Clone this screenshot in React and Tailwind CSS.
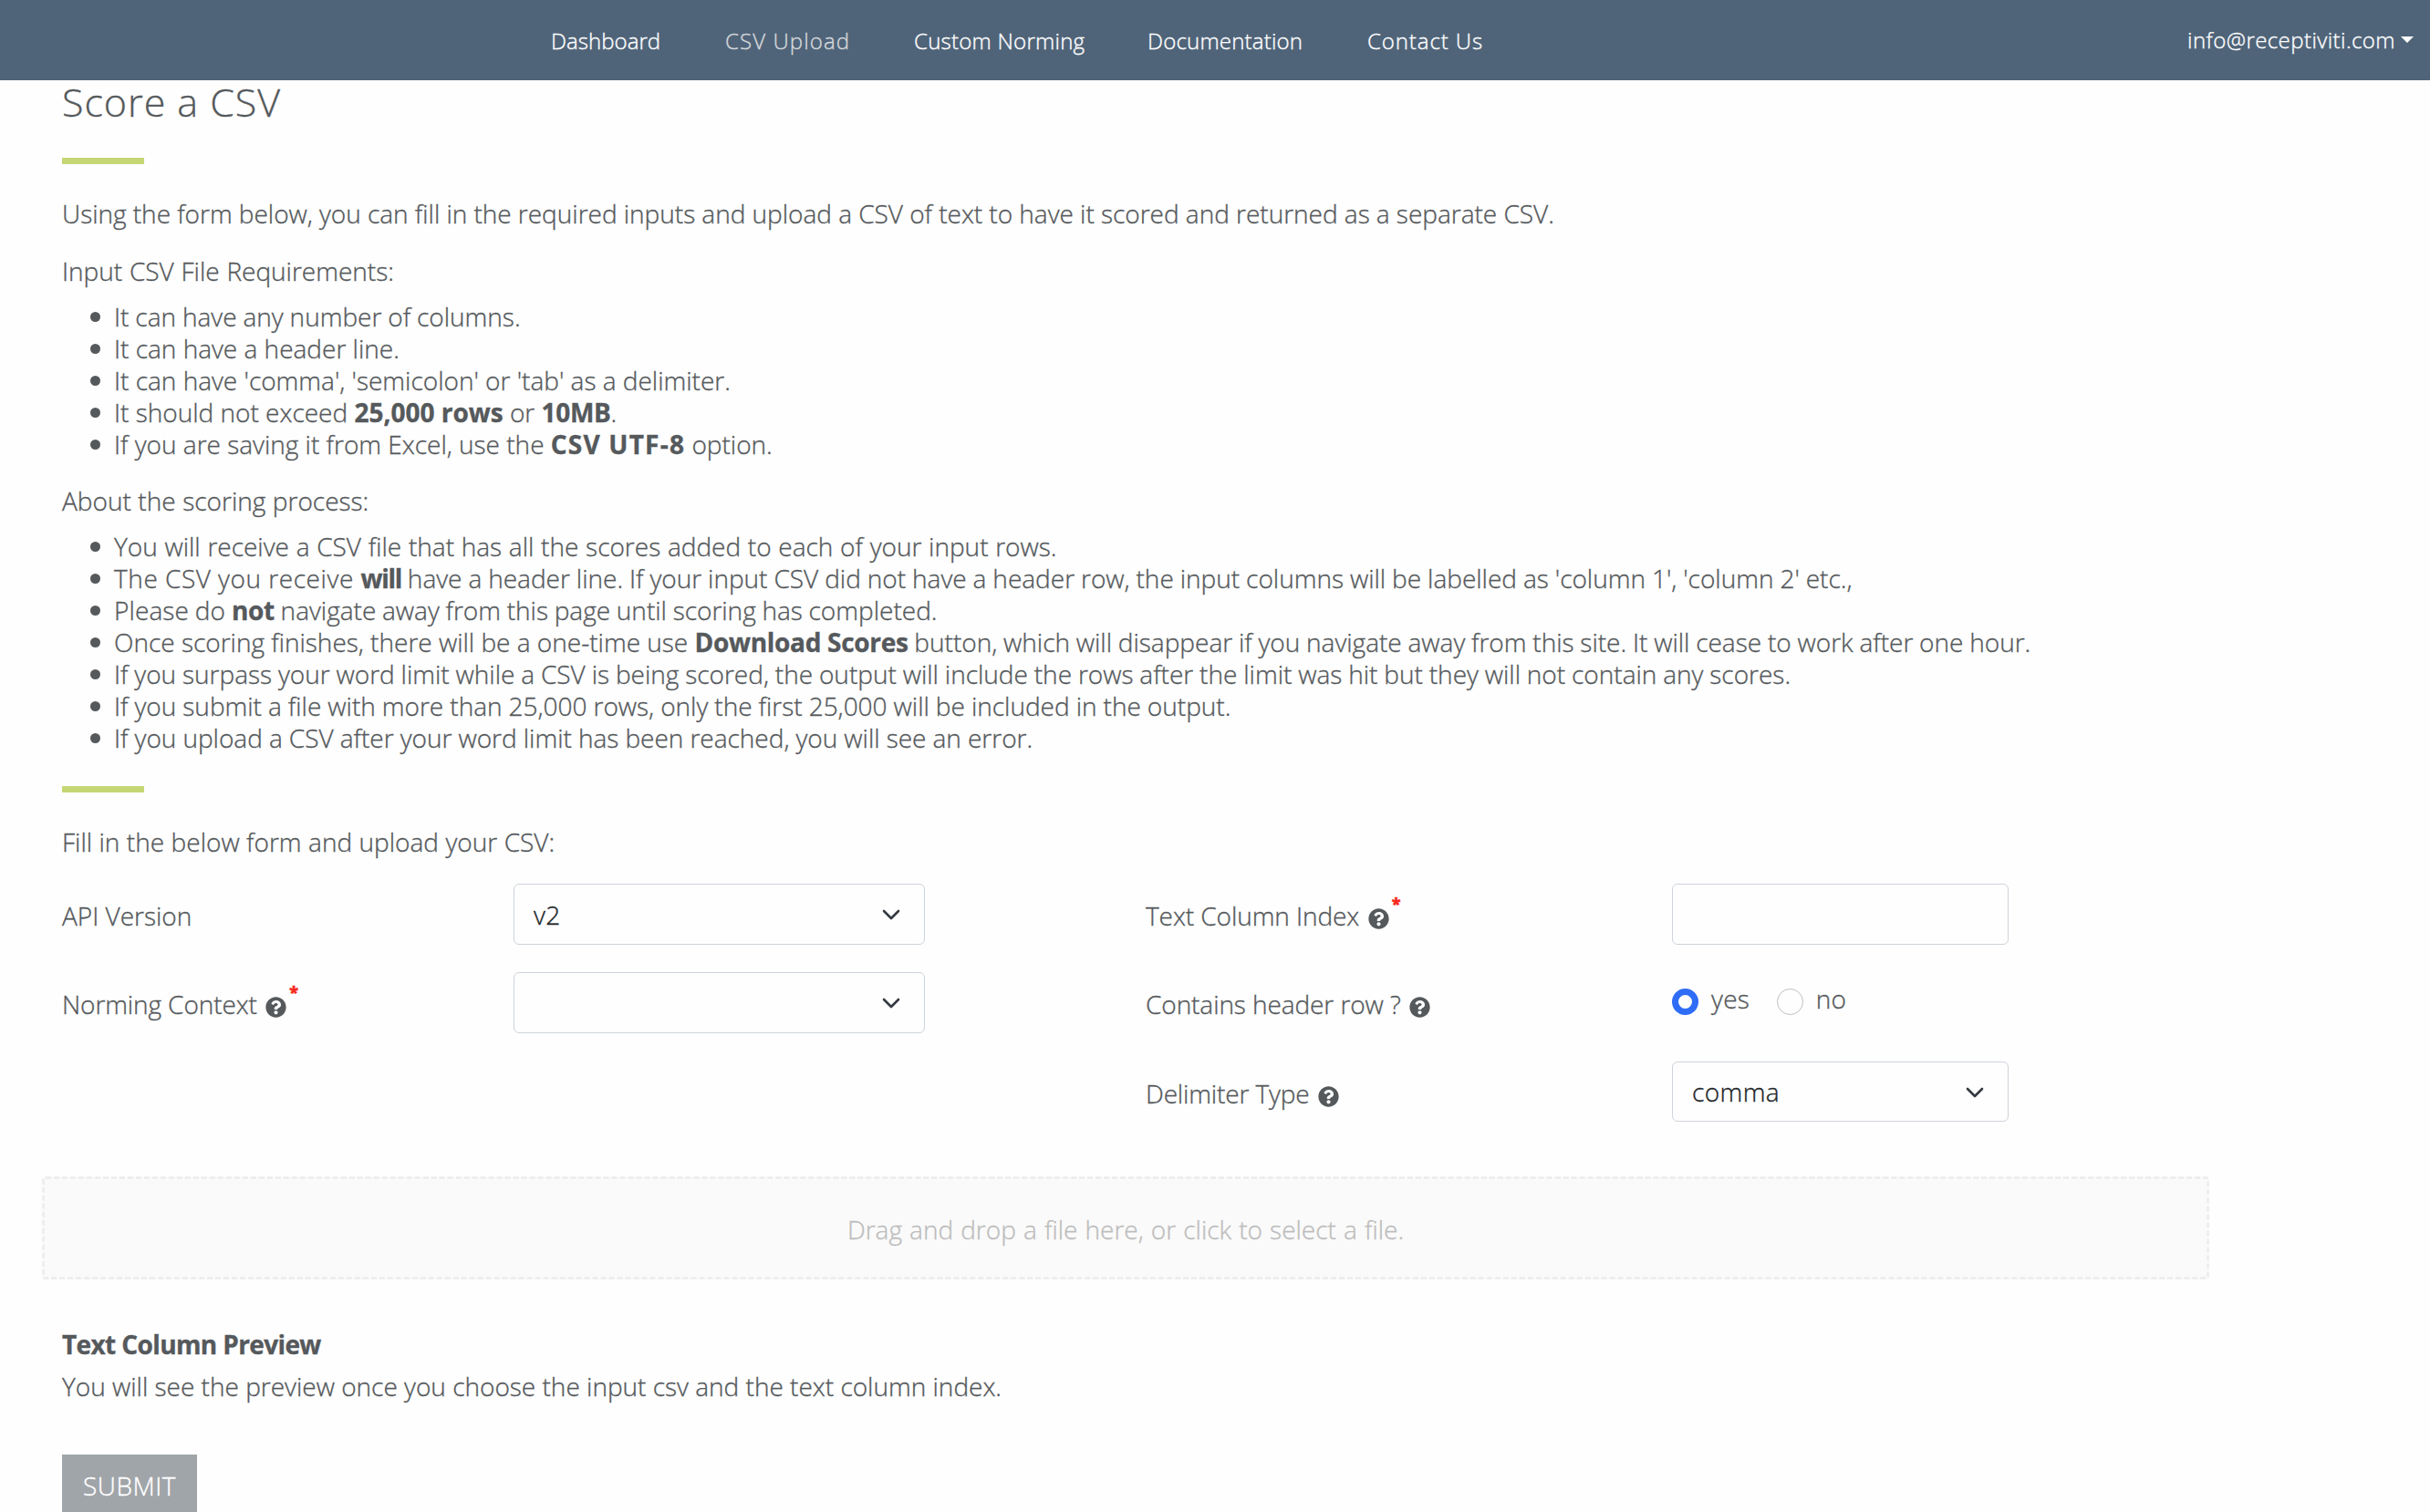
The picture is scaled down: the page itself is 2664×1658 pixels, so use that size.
import { useState } from "react";
import { FaQuestionCircle } from "react-icons/fa";

const navLinks = [
  { label: "Dashboard", style: "w-[191px] tracking-[0.05px]" },
  { label: "CSV Upload", style: "w-[207px] tracking-[1.1px] text-[#d5d8da]" },
  { label: "Custom Norming", style: "w-[256px] tracking-[0.25px]" },
  { label: "Documentation", style: "w-[241px] tracking-[0.2px]" },
  { label: "Contact Us", style: "w-[140px] tracking-[0.9px]" },
];

const requirements = [
  { style: "[word-spacing:-0.35px]", text: "It can have any number of columns." },
  { style: "", text: "It can have a header line." },
  { style: "", text: "It can have 'comma', 'semicolon' or 'tab' as a delimiter." },
  {
    style: "",
    text: <>It should not exceed <b className="font-bold">25,000 rows</b> or <b className="font-bold tracking-[-0.3px]">10MB</b>.</>,
  },
  {
    style: "",
    text: <>If you are saving it from Excel, use the <b className="font-bold tracking-[1.2px]">CSV UTF-8</b> option.</>,
  },
];

const processNotes = [
  { style: "[word-spacing:0.45px]", text: "You will receive a CSV file that has all the scores added to each of your input rows." },
  {
    style: "[word-spacing:-0.33px]",
    text: (
      <>
        <span className="tracking-[0.6px]">The CSV you receive </span>
        <b className="font-bold tracking-[-1.3px]">will</b> have a header line. If your input CSV did not have a header
        row, the input columns will be labelled as 'column 1', 'column 2' etc.,
      </>
    ),
  },
  {
    style: "[word-spacing:-0.55px]",
    text: <><span className="tracking-[0.1px]">Please do </span><b className="font-bold tracking-[-0.3px]">not</b> navigate away from this page until scoring has completed.</>,
  },
  {
    style: "",
    text: (
      <>
        Once scoring finishes, there will be a one-time use <b className="font-bold tracking-[-0.3px]">Download Scores</b>
        <span className="[word-spacing:-0.48px]"> button, which will disappear if you navigate away from this site. It will cease to work after one hour.</span>
      </>
    ),
  },
  {
    style: "[word-spacing:-0.4px]",
    text: "If you surpass your word limit while a CSV is being scored, the output will include the rows after the limit was hit but they will not contain any scores.",
  },
  { style: "[word-spacing:-0.25px]", text: "If you submit a file with more than 25,000 rows, only the first 25,000 will be included in the output." },
  { style: "[word-spacing:-0.2px]", text: "If you upload a CSV after your word limit has been reached, you will see an error." },
];

const BulletList = ({ items }) => (
  <ul className="mt-[15px] pl-[31px]">
    {items.map((item, i) => (
      <li key={i} className="flex items-center">
        <span className="mr-[15.5px] size-[10.5px] rounded-full bg-[#55595c]" />
        <span className={`whitespace-nowrap ${item.style}`}>{item.text}</span>
      </li>
    ))}
  </ul>
);

const Divider = ({ className }) => <div className={`h-[7px] w-[90px] bg-[#c5d775] ${className}`} />;

const Label = ({ children, help, required, className }) => (
  <div className={`flex pt-[18px] ${className}`}>
    <span className="whitespace-nowrap">{children}</span>
    {help && <FaQuestionCircle className="mt-[9px] ml-[9.5px] size-[23px]" />}
    {required && (
      <span className="-mt-[14px] ml-[3px] text-[18px] font-extrabold text-[#f5291b]">*</span>
    )}
  </div>
);

const Select = ({ value, className }) => (
  <div
    className={`flex items-center justify-between rounded-[6px] border-[1.5px] border-[#ced4da] pt-px pr-[26px] pl-[21px] text-[#212529] ${className}`}
  >
    <span className="tracking-[0.4px]">{value}</span>
    <svg
      viewBox="0 0 20 12"
      className="h-[12px] w-[20px]"
      fill="none"
      stroke="#343a40"
      strokeWidth="2.6"
      strokeLinecap="round"
      strokeLinejoin="round"
    >
      <path d="M2 2l8 8 8-8" />
    </svg>
  </div>
);

const App = () => {
  const [hasHeader, setHasHeader] = useState("yes");

  return (
    <div className="h-[1658px] w-full overflow-hidden bg-[#fefefe] font-['Open_Sans',sans-serif] text-[28px] leading-[35px] font-light text-[#55595c] [-webkit-text-stroke:0.35px]">

      <nav className="flex h-[88px] items-center bg-[#4f6479] text-[24px] text-white">
        <div className="flex pl-[604px]">
          {navLinks.map((link) => (
            <a key={link.label} className={`whitespace-nowrap ${link.style}`}>{link.label}</a>
          ))}
        </div>
        <div className="mr-[18px] mb-[2px] ml-auto flex items-center">
          <span className="tracking-[0.43px]">info@receptiviti.com</span>
          <span className="ml-[6px] border-x-[7px] border-t-[7px] border-x-transparent border-t-white" />
        </div>
      </nav>

      <main className="px-[68px]">
        <h1 className="text-[43px] leading-[48px] tracking-[0.95px]">Score a CSV</h1>
        <Divider className="mt-[37px]" />

        <p className="mt-[37px] [word-spacing:-0.11px]">
          Using the form below, you can fill in the required inputs and upload a CSV of text to have it scored and
          returned as a separate CSV.
        </p>

        <p className="mt-[28px] [word-spacing:0.5px]">Input CSV File Requirements:</p>
        <BulletList items={requirements} />

        <p className="mt-[27px] [word-spacing:0.3px]">About the scoring process:</p>
        <BulletList items={processNotes} />

        <Divider className="mt-[35px]" />
        <p className="mt-[37px] [word-spacing:0.2px]">Fill in the below form and upload your CSV:</p>

        {/* Form */}
        <div className="mt-[28px] flex h-[261px]">

          <div className="w-[1188px]">
            <div className="flex h-[97px]">
              <Label className="w-[495px]">API Version</Label>
              <Select value="v2" className="h-[67px] w-[451px]" />
            </div>
            <div className="flex h-[98px]">
              <Label className="w-[495px] tracking-[-0.1px]" help required>Norming Context</Label>
              <Select value="" className="h-[67px] w-[451px]" />
            </div>
          </div>

          <div>
            <div className="flex h-[97px]">
              <Label className="w-[577px] tracking-[-0.07px]" help required>Text Column Index</Label>
              <input className="h-[67px] w-[369px] rounded-[6px] border-[1.5px] border-[#ced4da] px-5" />
            </div>
            <div className="flex h-[98px]">
              <Label className="w-[577px] tracking-[-0.08px]" help>Contains header row ?</Label>
              <div className="flex pt-[12px]">
                {["yes", "no"].map((value) => (
                  <label key={value} className="mr-[29.5px] flex" onClick={() => setHasHeader(value)}>
                    <span
                      className={`mt-[6px] mr-[14px] size-[29px] rounded-full ${
                        hasHeader === value ? "border-[7.5px] border-[#2f6df6]" : "border-[1.5px] border-[#bfbfbf]"
                      }`}
                    />
                    <span className="tracking-[0.3px]">{value}</span>
                  </label>
                ))}
              </div>
            </div>
            <div className="flex h-[66px]">
              <Label className="w-[577px] tracking-[-0.14px]" help>Delimiter Type</Label>
              <Select value="comma" className="h-[66px] w-[369px]" />
            </div>
          </div>

        </div>

        {/* Dropzone */}
        <div className="mt-[60px] -ml-[22px] flex h-[113px] w-[2376px] items-center justify-center rounded-[4px] border-[3px] border-dashed border-[#eeeeee] bg-[#fafafa] pt-[3px] text-[#bdbdbd] [word-spacing:0.85px]">
          Drag and drop a file here, or click to select a file.
        </div>

        <p className="mt-[54px] font-bold tracking-[-0.62px]">Text Column Preview</p>
        <p className="mt-[11px]">You will see the preview once you choose the input csv and the text column index.</p>

        <button className="mt-[57px] block h-[63px] w-[148px] bg-[#a0a5a9] pt-[5px] text-white">
          <span className="tracking-[0.5px]">SUBMIT</span>
        </button>
      </main>

    </div>
  );
};

export default App;
